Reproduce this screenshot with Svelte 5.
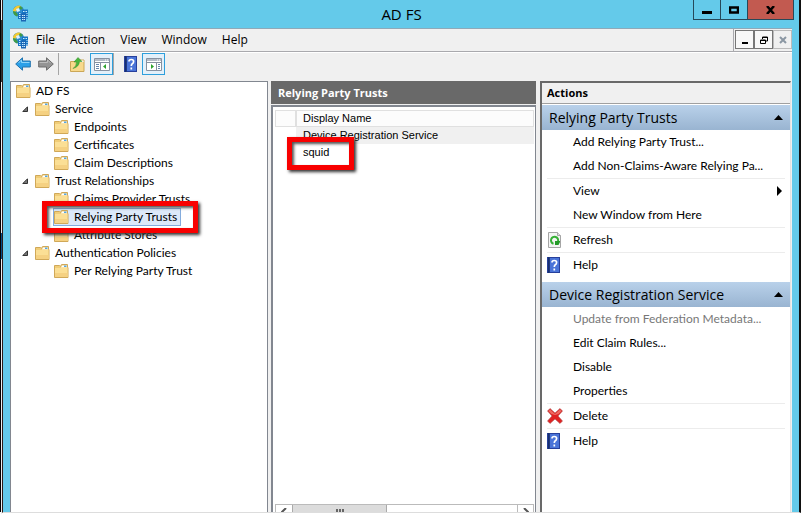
<script>
  const menus = ['File', 'Action', 'View', 'Window', 'Help'];
  const tree = [
    { text: 'AD FS', level: 0 },
    { text: 'Service', level: 1, open: true },
    { text: 'Endpoints', level: 2 },
    { text: 'Certificates', level: 2 },
    { text: 'Claim Descriptions', level: 2 },
    { text: 'Trust Relationships', level: 1, open: true },
    { text: 'Claims Provider Trusts', level: 2 },
    { text: 'Relying Party Trusts', level: 2, selected: true },
    { text: 'Attribute Stores', level: 2 },
    { text: 'Authentication Policies', level: 1, open: true },
    { text: 'Per Relying Party Trust', level: 2 }
  ];
  const sections = [
    {
      title: 'Relying Party Trusts',
      groups: [
        [{ text: 'Add Relying Party Trust...' }, { text: 'Add Non-Claims-Aware Relying Pa...' }],
        [{ text: 'View', more: true }, { text: 'New Window from Here' }],
        [{ text: 'Refresh', icon: 'refresh' }],
        [{ text: 'Help', icon: 'help' }]
      ]
    },
    {
      title: 'Device Registration Service',
      groups: [
        [
          { text: 'Update from Federation Metadata...', disabled: true },
          { text: 'Edit Claim Rules...' },
          { text: 'Disable' },
          { text: 'Properties' }
        ],
        [{ text: 'Delete', icon: 'delete' }],
        [{ text: 'Help', icon: 'help' }]
      ]
    }
  ];
</script>

{#snippet appIcon()}
  <svg width="17" height="17" viewBox="0 0 17 17" aria-hidden="true">
    <circle cx="6.5" cy="6" r="5.5" fill="#2f8fd0" />
    <path d="M1 5Q3 0 8 .5l2 2-4 1-2 3-3 0z" fill="#f3c931" />
    <path d="M1 6l3 1 2 3-1 1.500Q1 10 1 6zM8 1l3 2-2 2-2-2z" fill="#3f9b46" />
    <path d="M4 4l3-1 1 3-3 1z" fill="#d8f0ff" />
    <path d="M6 7.500h3.500v6.500H6zM10 4.500h6v9h-6z" fill="#1675c4" />
    <path d="M9 8.500h5v8H9z" fill="#1b66b5" />
    <path d="M7 8.500h1.500M7 10.500h1.500M7 12.500h1.500M11 6.500h1.500M13.500 6.500H15M14.500 8.500h1M14.500 10.500h1M14.500 12.500h1M10 10.500h1.500M12 10.500h1M10 12.500h1.500M12 12.500h1M10 14.500h1.500M12 14.500h1" stroke="#c8ecff" />
  </svg>
{/snippet}

{#snippet folder()}
  <svg class="folder" width="15" height="14" viewBox="0 0 15 14" aria-hidden="true">
    <path d="M.5 1.500h5l1.500 1V1.500q0-1 1-1h5.500v3h.5v10H.500z" fill="#f0cd78" stroke="#d0a858" />
    <path d="M8 1.500h5v2H7z" fill="#fff" />
    <path d="M10 1.500h2.500v1.500h-2.500z" fill="#57a6df" />
    <path d="M1 4h6l1-.5h5.500V13H1z" fill="#fbdf95" />
    <path d="M1 9h12.500v4H1z" fill="#f5d182" />
  </svg>
{/snippet}

{#snippet helpIcon()}
  <svg width="13" height="16" viewBox="0 0 13 16" aria-hidden="true">
    <path d="M0 0h13v16H0z" fill="#27409c" />
    <path d="M3 1h9v14H3z" fill="#4a74d8" />
    <path d="M1 0h1.500v16H1z" fill="#18306f" />
    <path d="M5 5.500Q5 3.500 7.300 3.500T9.600 5.500Q9.600 7 8.300 7.800Q7.300 8.500 7.300 10M7.300 11.500v2" fill="none" stroke="#fff" stroke-width="1.700" />
  </svg>
{/snippet}

{#snippet refreshIcon()}
  <svg width="14" height="16" viewBox="0 0 14 16" aria-hidden="true">
    <path d="M1.500.500h9l3 3v12H1.500z" fill="#f4f4f4" stroke="#a5a5a5" />
    <path d="M10.500.500v3h3" fill="#ddd" stroke="#a5a5a5" />
    <path d="M6.500 11.800A3.600 3.600 0 1 1 11 9.500" fill="none" stroke="#35b035" stroke-width="2" />
    <path d="M8 9h5v1L11.500 13H8z" fill="#249a28" />
  </svg>
{/snippet}

{#snippet deleteIcon()}
  <svg width="16" height="16" viewBox="0 0 16 16" aria-hidden="true">
    <path d="M3 .5L8 5l5-4.500 2.500 2.500L11 8l4.500 5-2.500 2.500L8 11l-5 4.500L.5 13 5 8 .5 3z" fill="#e02222" stroke="#a95050" stroke-width=".6" />
    <path d="M3 1.500L8 6l5-4.500L14.500 3 11.500 6 8 7 4.500 6 1.500 3z" fill="#ee6a62" />
  </svg>
{/snippet}

{#snippet paneIcon(right)}
  <svg width="16" height="13" viewBox="0 0 16 13" aria-hidden="true">
    <path d="M.5.500h15v12H.500z" fill="#fff" stroke="#8791a0" />
    <path d="M1 1h14v2H1z" fill="#b5bcc7" />
    <path d="M11 2h1M13 2h1" stroke="#fff" />
    <path d="M1 4.500h14" stroke="#8791a0" />
    {#if right}
      <path d="M10.500 5v7" stroke="#8791a0" />
      <path d="M12 6.500h2M12 8.500h2M12 10.500h2" stroke="#6686ad" />
      <path d="M5 6v5l3-2.500z" fill="#2fa32f" />
    {:else}
      <path d="M6.500 5v7" stroke="#8791a0" />
      <path d="M2 6.500h3M2 8.500h3M2 10.500h3" stroke="#6686ad" />
      <path d="M12 6v5L9 8.500z" fill="#2fa32f" />
    {/if}
  </svg>
{/snippet}

{#snippet arrow(forward)}
  <svg width="16" height="14" viewBox="0 0 16 14" aria-hidden="true">
    {#if forward}
      <path d="M15.300 7L8.500 .8v3.200H.700v6h7.800v3.200z" fill="#949494" stroke="#6c6c6c" />
      <path d="M1.500 5.500h8V3l3 3" fill="none" stroke="#bcbcbc" />
    {:else}
      <path d="M.7 7L7.500 .8v3.200h7.800v6H7.500v3.200z" fill="#2ba0e8" stroke="#2474ad" />
      <path d="M14.500 5.500h-8V3l-3 3" fill="none" stroke="#8cd4fa" />
    {/if}
  </svg>
{/snippet}

<div class="desktop">
  <div class="window">
    <header class="titlebar">
      <span class="app-icon">{@render appIcon()}</span>
      <h1>AD FS</h1>
      <div class="window-buttons">
        <button aria-label="Minimize"><svg width="10" height="10"><path d="M0 6h10v3H0z" /></svg></button>
        <button aria-label="Maximize"><svg width="10" height="8"><path d="M1 1.500h8v5H1z" fill="none" stroke="#000" stroke-width="2.500" /></svg></button>
        <button class="close" aria-label="Close"><svg width="9" height="8"><path d="M1 0l7 8M8 0L1 8" stroke="#000" stroke-width="2.500" /></svg></button>
      </div>
    </header>

    <div class="client">
      <div class="menubar">
        {@render appIcon()}
        <nav>
          {#each menus as menu}<button>{menu}</button>{/each}
        </nav>
        <div class="child-buttons">
          <button aria-label="Minimize child window"><svg width="8" height="8"><path d="M1 6h6v2H1z" /></svg></button>
          <button aria-label="Restore child window"><svg width="8" height="8"><path d="M2.500 3V1H7.500V5H6M.5 4h5v3.500h-5zM2 1.500h6M0 4.500h6" fill="none" stroke="#000" /></svg></button>
          <button disabled aria-label="Close child window"><svg width="8" height="8"><path d="M1 1l6 6M7 1L1 7" stroke="#8b97a3" stroke-width="2" /></svg></button>
        </div>
      </div>

      <div class="toolbar">
        <button aria-label="Back">{@render arrow(false)}</button>
        <button aria-label="Forward">{@render arrow(true)}</button>
        <span class="rule"></span>
        <button aria-label="Up one level">
          <svg width="15" height="15" viewBox="0 0 15 15" aria-hidden="true">
            <path d="M.5 4.500h5l1-1.500h7.500v11.500H.500z" fill="#f8d98c" stroke="#cba757" />
            <path d="M9 3.500h4.500v1.500H9z" fill="#fff" />
            <path d="M3 11.500Q6.500 9.500 6.500 5H4L8 .5 12 4.500H9.500Q9 10 3 11.500z" fill="#4ab53c" stroke="#2f8c2a" stroke-width=".5" />
          </svg>
        </button>
        <button class="pressed" aria-label="Show or hide console tree">{@render paneIcon(false)}</button>
        <span class="rule near"></span>
        <button aria-label="Help">{@render helpIcon()}</button>
        <button class="pressed" aria-label="Show or hide action pane">{@render paneIcon(true)}</button>
      </div>

      <main>
        <ul class="tree">
          {#each tree as node}
            <li class="level{node.level}">
              {#if node.level > 0}
                <span class="twisty">
                  {#if node.open}<svg width="6" height="6" aria-hidden="true"><path d="M5.500 .8v4.700H.8z" fill="#777" stroke="#333" /></svg>{/if}
                </span>
              {/if}
              <button class:selected={node.selected}>{@render folder()}<span>{node.text}</span></button>
              {#if node.selected}<span class="marker tree-marker"></span>{/if}
            </li>
          {/each}
        </ul>

        <section class="results">
          <h2>Relying Party Trusts</h2>
          <div class="list">
            <table>
              <thead><tr><th class="state" aria-label="State"></th><th>Display Name</th></tr></thead>
              <tbody>
                <tr class="shaded"><td class="state"></td><td>Device Registration Service</td></tr>
                <tr><td class="state"></td><td>squid<span class="marker row-marker"></span></td></tr>
              </tbody>
            </table>
            <div class="scrollbar">
              <button aria-label="Scroll left"><svg width="6" height="8"><path d="M5 0L1 4l4 4" fill="none" stroke="#555" stroke-width="2" /></svg></button>
              <span class="thumb"><i></i><i></i><i></i></span>
              <button class="end" aria-label="Scroll right"><svg width="6" height="8"><path d="M1 0l4 4-4 4" fill="none" stroke="#555" stroke-width="2" /></svg></button>
            </div>
          </div>
        </section>

        <aside>
          <h2>Actions</h2>
          {#each sections as section}
            <section>
              <h3>{section.title}<svg width="9" height="5" aria-hidden="true"><path d="M0 5L4.500 0 9 5z" /></svg></h3>
              {#each section.groups as group}
                <div class="group">
                  {#each group as item}
                    <button disabled={item.disabled}>
                      <span class="icon">
                        {#if item.icon === 'help'}{@render helpIcon()}
                        {:else if item.icon === 'refresh'}{@render refreshIcon()}
                        {:else if item.icon === 'delete'}{@render deleteIcon()}{/if}
                      </span>
                      <span class="label">{item.text}</span>
                      {#if item.more}<svg width="5" height="10" aria-hidden="true"><path d="M0 0l5 5-5 5z" /></svg>{/if}
                    </button>
                  {/each}
                </div>
              {/each}
            </section>
          {/each}
        </aside>
      </main>
    </div>
  </div>
</div>

<style>
  :global(body) { background: #fff; }
  * { box-sizing: border-box; }
  svg { display: block; flex: none; }
  h1, h2, h3, ul { margin: 0; padding: 0; font-weight: normal; }
  button { font: inherit; color: inherit; background: none; border: 0; padding: 0; margin: 0; display: flex; align-items: center; white-space: nowrap; }

  .desktop {
    height: 100vh;
    padding: 0 0 1px 2px;
    background:
      linear-gradient(#000, #000) 0 0 / 1px calc(100% - 2px) no-repeat,
      linear-gradient(#eee 20px, #333 20px, #333 82px, #eee 82px, #eee 233px, #05508a 233px, #05508a 259px, #eee 259px) 1px 0 / 1px 100% no-repeat;
    font: 12px/18px Lato, 'Open Sans', sans-serif;
    color: #000;
  }
  .window {
    height: 100%;
    display: flex;
    flex-direction: column;
    background: #64caea;
    border: solid #111;
    border-width: 0 2px 1px 1px;
    border-left-color: #2c1c18;
    border-bottom-color: #ddd;
    padding: 0 7px;
  }

  .titlebar { display: flex; height: 28px; flex: none; font-family: 'Open Sans', sans-serif; }
  .app-icon { padding: 5px 0 0 2px; }
  h1 { flex: 1; text-align: center; font-size: 15px; line-height: 28px; padding-left: 81px; }
  .window-buttons { display: flex; height: 20px; border: 1px solid #26495a; border-top: 0; margin-right: -2px; }
  .window-buttons button { width: 27px; justify-content: center; border-right: 1px solid #26495a; }
  .window-buttons .close { width: 45px; border: 0; background: #c25a50; }

  .client { flex: 1; min-height: 0; display: flex; flex-direction: column; background: #f0f0f0; border-top: 1px solid #8fa9b8; }
  .menubar { height: 23px; flex: none; display: flex; align-items: center; padding-left: 2px; border-bottom: 1px solid #a9a9ad; font-family: 'Open Sans', sans-serif; }
  nav { display: flex; flex: 1; gap: 15px; padding-left: 7px; }
  .child-buttons { display: flex; height: 100%; padding: 1px 0 2px 1px; border-left: 1px solid #a9a9ad; }
  .child-buttons button { width: 19px; justify-content: center; border: 1px solid #777; background: #f8f8f8; }
  .child-buttons button:disabled { border-color: #bbb; background: #f0f0f0; }

  .toolbar { height: 29px; flex: none; display: flex; align-items: flex-start; gap: 7px; padding: 0 5px; border-top: 1px solid #fff; }
  .toolbar button { height: 22px; }
  .toolbar .pressed { width: 23px; justify-content: center; background: #e3f0fa; border: 1px solid #2e9fdc; margin-left: -2px; }
  .rule { width: 1px; height: 22px; background: #a5a5a5; margin: 0 4px 0 -3px; }
  .rule.near { margin: 0 3px 0 -7px; }

  main { flex: 1; min-height: 0; display: grid; grid-template-columns: 258px minmax(0, 1fr) 251px; column-gap: 3px; padding-right: 1px; }

  .tree { list-style: none; background: #fff; border: 1px solid #828790; border-bottom: 0; padding-left: 4px; }
  .tree li { display: flex; height: 18px; position: relative; }
  .twisty { width: 19px; display: flex; align-items: center; justify-content: center; }
  .level2 { padding-left: 19px; }
  .tree button { height: 18px; gap: 5px; padding: 0 4px 0 1px; }
  .tree .selected { background: #dce9f9; box-shadow: inset 0 0 0 1px #84acdd; }

  .marker { position: absolute; border: 5px solid #f80000; box-shadow: 2px 2px 3px #333, inset 2px 2px 3px #555; pointer-events: none; z-index: 1; }
  .tree-marker { left: 27px; top: -7px; width: 156px; height: 32px; }
  .row-marker { left: -9px; top: -7px; width: 67px; height: 33px; }

  .results { display: flex; flex-direction: column; min-height: 0; margin-right: 1px; }
  .results h2 { background: #696969; color: #fff; font: bold 11px/23px 'Open Sans', sans-serif; padding-left: 7px; }
  .list { flex: 1; min-height: 0; margin-top: 1px; background: #fff; border: 1px solid #828790; border-width: 2px 1px 0 2px; padding: 3px 1px 0 2px; display: flex; flex-direction: column; justify-content: space-between; font: 11px/17px 'Liberation Sans', Arial, sans-serif; }
  table { border-collapse: separate; border-spacing: 0; width: 100%; }
  th, td { padding: 0 0 0 7px; height: 17px; text-align: left; font-weight: normal; position: relative; }
  th { background: #fcfcfc; box-shadow: inset 0 0 0 1px #e0e0e0; }
  .state { width: 21px; padding: 0; }
  .shaded td:last-child { background: #f0f0f0; }
  .scrollbar { display: flex; height: 8px; overflow: hidden; border: 1px solid #bbb; border-bottom: 0; align-items: flex-start; }
  .scrollbar button { width: 16px; justify-content: center; padding-top: 3px; }
  .scrollbar .end { margin-left: auto; border-left: 1px solid #bbb; }
  .thumb { width: 37%; height: 8px; background: #dcdcdc; border: solid #aaa; border-width: 0 1px; display: flex; justify-content: center; gap: 1px; padding-top: 4px; }
  .thumb i { width: 2px; height: 4px; background: #666; }

  aside { background: #fff; border: solid #696969; border-width: 2px 1px 0 2px; border-right-color: #e3e3e3; min-width: 0; }
  aside h2 { background: #f0f0f0; border-bottom: 1px solid #a0a0a0; font: bold 11px/20px 'Open Sans', sans-serif; height: 21px; padding-left: 5px; margin-bottom: 1px; }
  h3 { display: flex; align-items: center; justify-content: space-between; height: 25px; padding: 0 7px; font: 14px/25px 'Open Sans', sans-serif; background: linear-gradient(#b9d1ea, #99b4d1); }
  section + section { margin-top: 5px; }
  .group + .group { border-top: 1px solid #ececec; }
  .group { margin: 0 5px; }
  .group button { width: 100%; height: 24px; padding-right: 3px; }
  .group button:disabled { color: #777; }
  .icon { width: 26px; display: flex; flex: none; }
  .label { flex: 1; text-align: left; }
</style>
